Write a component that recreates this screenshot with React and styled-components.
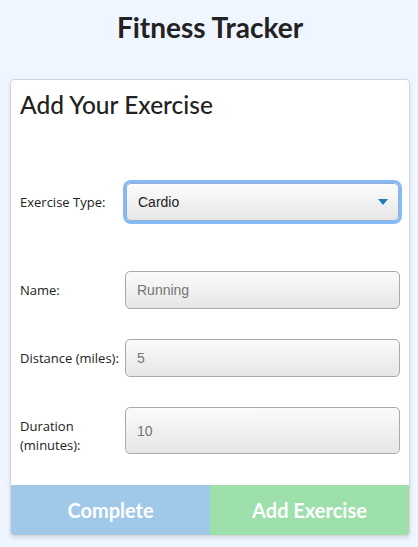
import React from "react";
import styled, { createGlobalStyle } from "styled-components";

const GlobalStyle = createGlobalStyle`
  *, *::before, *::after {
    box-sizing: border-box;
  }
  body {
    margin: 0;
    background: #eff6ff;
    font-family: "Open Sans", sans-serif;
  }
`;

const fields = [
  { label: "Name:", value: "Running" },
  { label: "Distance (miles):", value: "5" },
  { label: "Duration (minutes):", value: "10", tall: true },
];

const App = () => {
  return (
    <Page>
      <GlobalStyle />
      <Title>Fitness Tracker</Title>
      <Card>
        <Heading>Add Your Exercise</Heading>
        <Form>
          <Row $first>
            <Label>Exercise Type:</Label>
            <SelectBox>
              <span>Cardio</span>
              <Caret width="10" height="6" viewBox="0 0 10 6">
                <path d="M0 0 H10 L5 6 Z" fill="#1b7cb9" />
              </Caret>
            </SelectBox>
          </Row>
          {fields.map(f => (
            <Row key={f.label} $tall={f.tall}>
              <Label $tall={f.tall}>{f.label}</Label>
              <Input $tall={f.tall}>{f.value}</Input>
            </Row>
          ))}
        </Form>
        <Buttons>
          <Button $color="#9fc8e9">Complete</Button>
          <Button $color="#9de0ac">Add Exercise</Button>
        </Buttons>
      </Card>
    </Page>
  );
};

export default App;

const Page = styled.div`
  padding: 8px 8px 12px 10px;
`;

const Title = styled.h1`
  margin: 0 0 33px;
  text-align: center;
  font-family: Lato, sans-serif;
  font-weight: 700;
  font-size: 28px;
  line-height: 38px;
  color: #222;
`;

const Card = styled.div`
  background: #fff;
  border: 1px solid #d6d6d6;
  border-radius: 4px;
  box-shadow: 0 2px 4px rgba(0, 0, 0, 0.12);
  overflow: hidden;
`;

const Heading = styled.h2`
  margin: 0;
  padding: 10px 9px 0;
  font-family: Lato, sans-serif;
  font-weight: 500;
  font-size: 24.5px;
  line-height: 30px;
  color: #222;
`;

const Form = styled.div`
  display: flex;
  flex-direction: column;
  gap: 30px;
  padding: 63px 9px 31px 9px;
`;

const Row = styled.div`
  display: grid;
  grid-template-columns: 104px 1fr;
  align-items: ${p => (p.$tall ? "start" : "center")};
  margin-bottom: ${p => (p.$first ? "20px" : "0")};
`;

const Label = styled.label`
  font-size: 13px;
  line-height: 19px;
  color: #222;
  padding-right: 4px;
  padding-top: ${p => (p.$tall ? "10px" : "0")};
  margin-bottom: ${p => (p.$tall ? "-1px" : "0")};
`;

const SelectBox = styled.div`
  display: flex;
  align-items: center;
  justify-content: space-between;
  height: 38px;
  padding: 0 10px 0 11px;
  border: 1px solid #94add0;
  border-radius: 5px;
  background: linear-gradient(#fdfdfd, #e6e6e6);
  box-shadow: 0 0 0 3px #84baf6;
  font-family: "Liberation Sans", Arial, sans-serif;
  font-size: 14px;
  color: #222;
  margin: 0 1px 0 2px;
`;

const Caret = styled.svg`
  display: block;
`;

const Input = styled.div`
  display: flex;
  align-items: center;
  height: ${p => (p.$tall ? "47px" : "38px")};
  padding: 0 11px;
  border: 1px solid #aaa;
  border-radius: 5px;
  background: linear-gradient(#fbfbfb, #e6e6e6);
  font-family: "Liberation Sans", Arial, sans-serif;
  font-size: 14px;
  color: #757575;
  margin-left: 1px;
`;

const Buttons = styled.div`
  display: grid;
  grid-template-columns: 1fr 1fr;
`;

const Button = styled.button`
  height: 50px;
  border: none;
  background: ${p => p.$color};
  color: #fff;
  font-family: Lato, sans-serif;
  font-weight: 700;
  font-size: 20px;
  cursor: pointer;
`;
